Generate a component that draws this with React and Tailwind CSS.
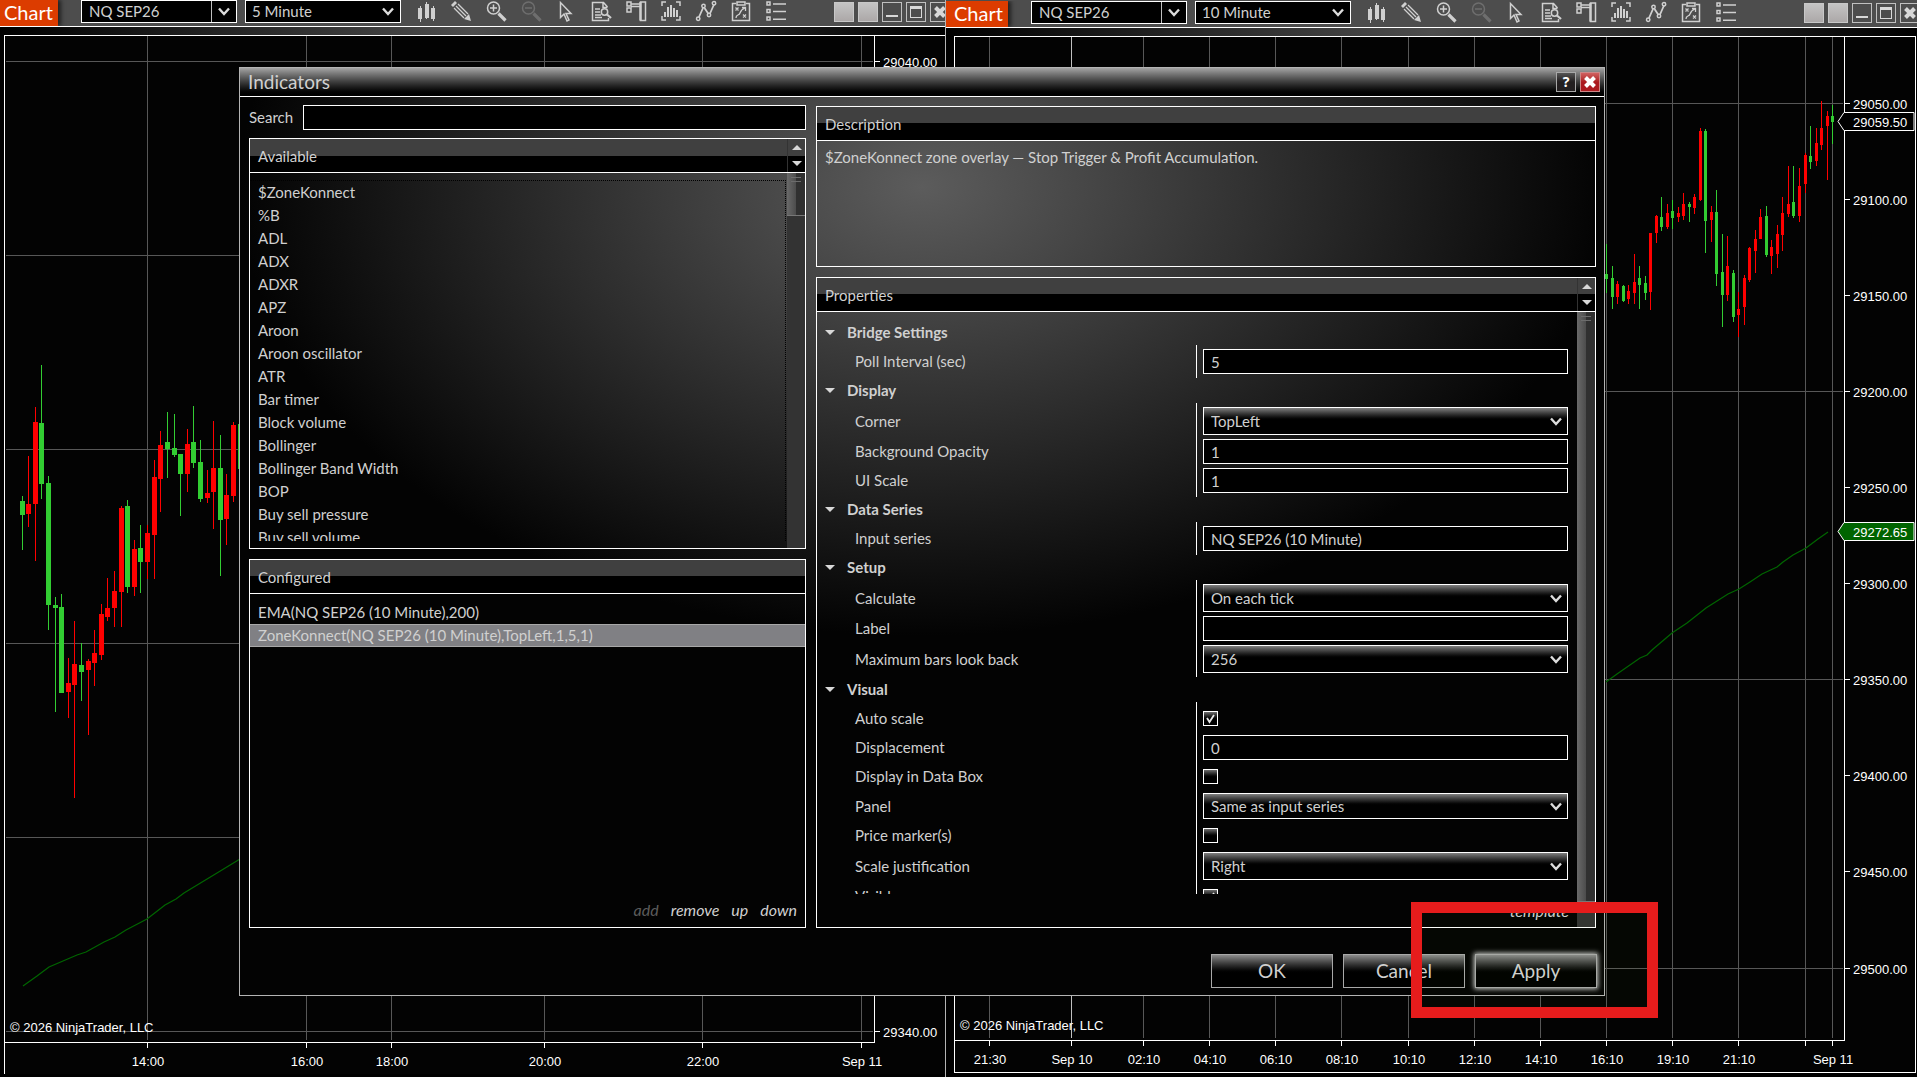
import { useState } from "react";
import clsx from "clsx";

const UP = "#32cd32";
const DOWN = "#ff0000";

// [x, high, low, bodyTop, bodyBottom, color]
const leftCandles = [
  [22, 496, 550, 501, 515, UP],
  [28, 456, 527, 504, 514, DOWN],
  [35, 407, 561, 422, 504, DOWN],
  [41, 365, 499, 423, 484, UP],
  [48, 476, 630, 483, 605, UP],
  [55, 597, 712, 605, 608, UP],
  [61, 594, 693, 607, 693, UP],
  [68, 658, 718, 683, 692, DOWN],
  [74, 621, 798, 664, 685, DOWN],
  [81, 643, 701, 665, 672, UP],
  [88, 659, 735, 661, 670, DOWN],
  [94, 630, 686, 653, 663, DOWN],
  [101, 604, 660, 614, 655, DOWN],
  [107, 578, 621, 608, 617, DOWN],
  [114, 571, 627, 591, 608, DOWN],
  [121, 506, 627, 508, 592, DOWN],
  [127, 500, 593, 506, 587, UP],
  [134, 540, 596, 549, 587, DOWN],
  [140, 525, 593, 548, 562, UP],
  [147, 525, 579, 533, 562, DOWN],
  [154, 460, 579, 477, 535, DOWN],
  [160, 431, 512, 445, 479, DOWN],
  [167, 412, 478, 442, 449, UP],
  [174, 414, 457, 448, 455, UP],
  [180, 454, 516, 454, 474, UP],
  [187, 429, 492, 444, 474, DOWN],
  [193, 406, 468, 442, 463, UP],
  [200, 440, 502, 462, 499, UP],
  [207, 470, 503, 493, 498, DOWN],
  [213, 421, 529, 468, 492, DOWN],
  [220, 435, 576, 468, 520, UP],
  [226, 474, 545, 495, 519, DOWN],
  [233, 422, 502, 425, 496, DOWN],
  [240, 424, 469, 424, 469, UP],
];

const rightCandles = [
  [1606, 244, 293, 274, 279, UP],
  [1612, 266, 309, 278, 297, UP],
  [1617, 281, 304, 284, 297, DOWN],
  [1623, 285, 302, 286, 301, UP],
  [1628, 285, 304, 291, 299, DOWN],
  [1634, 254, 304, 282, 293, DOWN],
  [1639, 266, 309, 278, 285, UP],
  [1645, 276, 300, 283, 293, UP],
  [1650, 233, 310, 233, 292, DOWN],
  [1656, 215, 243, 216, 233, DOWN],
  [1661, 197, 231, 217, 227, UP],
  [1667, 204, 229, 213, 227, DOWN],
  [1672, 200, 229, 211, 218, UP],
  [1678, 207, 222, 213, 217, DOWN],
  [1683, 193, 220, 204, 216, DOWN],
  [1689, 202, 222, 204, 207, UP],
  [1694, 194, 214, 197, 208, DOWN],
  [1700, 128, 201, 131, 200, DOWN],
  [1705, 129, 253, 131, 221, UP],
  [1711, 206, 242, 212, 220, DOWN],
  [1716, 190, 286, 212, 274, UP],
  [1722, 234, 327, 272, 295, UP],
  [1727, 236, 301, 266, 295, DOWN],
  [1733, 270, 322, 273, 317, UP],
  [1738, 292, 337, 309, 315, DOWN],
  [1744, 275, 325, 278, 307, DOWN],
  [1749, 247, 282, 248, 280, DOWN],
  [1755, 230, 273, 239, 251, DOWN],
  [1760, 209, 239, 217, 239, DOWN],
  [1766, 206, 257, 216, 255, UP],
  [1771, 240, 274, 247, 256, DOWN],
  [1777, 225, 268, 234, 254, DOWN],
  [1782, 197, 251, 213, 235, DOWN],
  [1788, 166, 217, 204, 214, DOWN],
  [1793, 166, 218, 202, 216, UP],
  [1799, 168, 222, 186, 216, DOWN],
  [1805, 153, 193, 155, 184, DOWN],
  [1810, 126, 169, 156, 162, UP],
  [1816, 128, 166, 143, 161, DOWN],
  [1821, 101, 150, 128, 145, DOWN],
  [1827, 111, 180, 116, 126, DOWN],
  [1832, 105, 144, 116, 122, UP],
];

const leftChart = {
  origin: [5, 36],
  plot: { left: 6, right: 874, top: 36, bottom: 1042 },
  bodyWidth: 5,
  candles: leftCandles,
  ema: "23,986 37,976 49,967 77,955 86,952 104,942 115,937 126,930 147,919 165,905 176,899 184,893 217,873 240,859",
  rows: [61, 255, 449, 643, 837, 1031],
  prices: [
    [61, "29040.00"],
    [1031, "29340.00"],
  ],
  times: [
    [147, "14:00"],
    [306, "16:00"],
    [391, "18:00"],
    [544, "20:00"],
    [702, "22:00"],
    [861, "Sep 11"],
  ],
  copyright: [10, 1032],
  markers: [],
};

const rightChart = {
  origin: [955, 37],
  plot: { left: 955, right: 1844, top: 37, bottom: 1040 },
  bodyWidth: 3,
  candles: rightCandles,
  ema: "1606,682 1617,674 1640,658 1647,655 1652,650 1672,633 1687,623 1706,608 1717,601 1728,594 1739,589 1750,582 1762,574 1777,567 1783,562 1793,555 1806,548 1818,539 1828,532",
  rows: [103, 391, 679, 968],
  prices: [
    [103, "29050.00"],
    [199, "29100.00"],
    [295, "29150.00"],
    [391, "29200.00"],
    [487, "29250.00"],
    [583, "29300.00"],
    [679, "29350.00"],
    [775, "29400.00"],
    [871, "29450.00"],
    [968, "29500.00"],
  ],
  times: [
    [989, "21:30"],
    [1071, "Sep 10", true],
    [1143, "02:10"],
    [1209, "04:10"],
    [1275, "06:10"],
    [1341, "08:10"],
    [1408, "10:10"],
    [1474, "12:10"],
    [1540, "14:10"],
    [1606, "16:10"],
    [1672, "19:10"],
    [1738, "21:10"],
    [1805, ""],
    [1832, "Sep 11"],
  ],
  copyright: [960, 1030],
  markers: [
    [121, "29059.50", "#000"],
    [531, "29272.65", "#006400"],
  ],
};

const available = [
  "$ZoneKonnect",
  "%B",
  "ADL",
  "ADX",
  "ADXR",
  "APZ",
  "Aroon",
  "Aroon oscillator",
  "ATR",
  "Bar timer",
  "Block volume",
  "Bollinger",
  "Bollinger Band Width",
  "BOP",
  "Buy sell pressure",
  "Buy sell volume",
];

const configured = ["EMA(NQ SEP26 (10 Minute),200)", "ZoneKonnect(NQ SEP26 (10 Minute),TopLeft,1,5,1)"];

const properties = [
  { title: "Bridge Settings", fields: [{ label: "Poll Interval (sec)", type: "text", value: "5" }] },
  {
    title: "Display",
    fields: [
      { label: "Corner", type: "select", value: "TopLeft" },
      { label: "Background Opacity", type: "text", value: "1" },
      { label: "UI Scale", type: "text", value: "1" },
    ],
  },
  { title: "Data Series", fields: [{ label: "Input series", type: "text", value: "NQ SEP26 (10 Minute)" }] },
  {
    title: "Setup",
    fields: [
      { label: "Calculate", type: "select", value: "On each tick" },
      { label: "Label", type: "text", value: "" },
      { label: "Maximum bars look back", type: "select", value: "256" },
    ],
  },
  {
    title: "Visual",
    fields: [
      { label: "Auto scale", type: "checkbox", value: true },
      { label: "Displacement", type: "text", value: "0" },
      { label: "Display in Data Box", type: "checkbox", value: false },
      { label: "Panel", type: "select", value: "Same as input series", short: true },
      { label: "Price marker(s)", type: "checkbox", value: false },
      { label: "Scale justification", type: "select", value: "Right" },
      { label: "Visible", type: "checkbox", value: true },
    ],
  },
];

const tools = [
  {
    name: "Bar type",
    icon: (
      <path
        d="M2 7h4v11H2zM4 5h1v16H4zM9 3h4v14H9zM10 1h1v17h-1zM15 7h4v11h-4zM17 5h1v15h-1z"
        fill="currentColor"
        stroke="none"
        shapeRendering="crispEdges"
      />
    ),
  },
  {
    name: "Drawing tools",
    icon: (
      <>
        <path d="M0 4l4-4 2 2-4 4z" fill="currentColor" stroke="none" />
        <path d="M3 7l10 10M5 5l10 10M7 3l10 10" strokeWidth="1.3" />
        <path d="M13 18l5-5 2 7z" fill="currentColor" stroke="none" />
      </>
    ),
  },
  {
    name: "Zoom in",
    icon: (
      <>
        <circle cx="7.5" cy="7" r="6" />
        <path d="M7.5 3.5v7M4 7h7" />
        <path d="M12.5 12.5l7 7" strokeWidth="3.2" />
      </>
    ),
  },
  {
    name: "Zoom out",
    disabled: true,
    icon: (
      <>
        <circle cx="7.5" cy="7" r="6" />
        <path d="M4 7h7" />
        <path d="M12.5 12.5l7 7" strokeWidth="3.2" />
      </>
    ),
  },
  { name: "Cursor", icon: <path d="M4.5 1.5v15l3.5-3.5 3 7 2-1-3-6.5h5z" /> },
  {
    name: "Data box",
    icon: (
      <>
        <path d="M17.5 17v2.5h-16v-18h11l4 4.5M12 1.5v5h4.5" />
        <path d="M4 8h5M4 11h5M4 14h6M4 16.5h7" strokeWidth="1.3" />
        <circle cx="13.5" cy="11" r="3.2" />
        <path d="M16 13.5l4 3.500" strokeWidth="2.2" />
      </>
    ),
  },
  {
    name: "Chart trader",
    icon: (
      <>
        <path d="M1 1h4v4H1zM1 7h4v4H1zM14.5 1h5v18.5h-5zM5 3h9M5 5.5h9" />
        <path d="M14.5 1v18.5" strokeWidth="2.4" />
      </>
    ),
  },
  {
    name: "Indicators",
    icon: (
      <>
        <path d="M1 5V1h4M15 1h4v4M1 15v4h4M15 19h4v-4" />
        <path d="M3 11h2v5H3zM6 6h2v10H6zM9 4h2v12H9zM12 7h2v9h-2zM15 9h2v7h-2z" fill="currentColor" stroke="none" />
      </>
    ),
  },
  {
    name: "Strategies",
    icon: (
      <>
        <path d="M3 16L7 7M8.5 7l4 6M14 12.5l4-9" strokeWidth="1.8" />
        <circle cx="2.2" cy="17.8" r="1.7" />
        <circle cx="7.5" cy="5" r="1.7" />
        <circle cx="13" cy="14" r="1.7" />
        <circle cx="18" cy="2.2" r="1.7" />
      </>
    ),
  },
  {
    name: "Strategy performance",
    icon: (
      <>
        <path d="M5 2.5H1.5v17h17v-17H15M6 1h8v3H6z" />
        <path
          d="M4.5 6.5l3 3M7.5 6.5l-3 3M12 13.5l3 3M15 13.5l-3 3M5 17c0-4 3-2 4-5s2-4 5-5M11 6.5h3.5V10"
          strokeWidth="1.3"
        />
      </>
    ),
  },
  {
    name: "Properties",
    icon: <path d="M1 1h3v3H1zM1 8.500h3v3H1zM1 16h3v3H1zM7 3h13M7 10.5h13M7 18.2h13" />,
  },
];

const Chevron = ({ className }) => (
  <svg viewBox="0 0 12 9" className={clsx("h-[9px] w-3", className)} fill="none" stroke="#dcdcdc" strokeWidth="2.4">
    <path d="M1 1.5l5 5.5 5-5.5" />
  </svg>
);

const Triangle = ({ up, className }) => (
  <svg viewBox="0 0 10 5" className={clsx("h-[5px] w-[10px]", className)} fill="#d8d8d8">
    <path d={up ? "M5 0l5 5H0z" : "M0 0h10L5 5z"} />
  </svg>
);

const Cross = ({ className }) => (
  <svg viewBox="0 0 12 12" className={className} stroke="currentColor" strokeWidth="4">
    <path d="M1.5 1.5l9 9M10.5 1.5l-9 9" />
  </svg>
);

const PriceChart = ({ chart }) => {
  const { origin, plot, bodyWidth, candles, ema, rows, prices, times, copyright, markers } = chart;
  const half = (bodyWidth - 1) / 2;

  return (
    <svg className="min-h-0 w-full flex-1 bg-[#030303] font-['Liberation_Sans',sans-serif] text-[13px]" fill="#fff">
      <g transform={`translate(${-origin[0]} ${-origin[1]})`}>
        <g shapeRendering="crispEdges">
          {rows.map((y) => (
            <rect key={y} x={plot.left} y={y} width={plot.right - plot.left - 1} height="1" fill="#575757" />
          ))}
          {times.map(([x, , bright]) => (
            <rect
              key={x}
              x={x}
              y={plot.top}
              width="1"
              height={plot.bottom - plot.top - 2}
              fill={bright ? "#c0c0c0" : "#575757"}
            />
          ))}
          {candles.map(([x, high, low, top, bottom, color]) => (
            <g key={x} fill={color}>
              <rect x={x} y={high} width="1" height={low - high} />
              <rect x={x - half} y={top} width={bodyWidth} height={bottom - top} />
            </g>
          ))}
          <rect x={plot.right} y={plot.top} width="1" height={plot.bottom - plot.top} />
          <rect x={origin[0]} y={plot.bottom} width={plot.right - origin[0] + 1} height="1" />
          {prices.map(([y]) => (
            <rect key={y} x={plot.right} y={y} width="6" height="1" />
          ))}
          {times.map(([x]) => (
            <rect key={x} x={x} y={plot.bottom} width="1" height="6" />
          ))}
        </g>
        <polyline points={ema} fill="none" stroke="#006400" strokeWidth="1.3" />
        {prices.map(([y, label]) => (
          <text key={y} x={plot.right + 9} y={y + 6}>
            {label}
          </text>
        ))}
        {times.map(([x, label]) => (
          <text key={x} x={x + 1} y={plot.bottom + 24} textAnchor="middle">
            {label}
          </text>
        ))}
        <text x={copyright[0]} y={copyright[1]}>
          © 2026 NinjaTrader, LLC
        </text>
        {markers.map(([y, label, fill]) => (
          <g key={label}>
            <path d={`M${plot.right - 6} ${y + 0.5}l6-9h70v18h-70z`} fill={fill} stroke="#fff" />
            <text x={plot.right + 9} y={y + 6}>
              {label}
            </text>
          </g>
        ))}
      </g>
    </svg>
  );
};

const Toolbar = ({ interval, tagClass, buttonsClass, className }) => (
  <div className={clsx("flex overflow-hidden border-b border-white bg-[#4d4d4d]", className)}>
    <div className={clsx("shrink-0 bg-[#dc3c00] text-[20px] leading-6 text-white shadow-[3px_0_4px_#222]", tagClass)}>
      Chart
    </div>
    <div className="flex shrink-0 items-start pl-[23px]">
      <div className="flex h-[23px] w-[156px] border border-white bg-black">
        <input
          aria-label="Instrument"
          defaultValue="NQ SEP26"
          className="h-5 w-[129px] pl-[7px] leading-5 outline-none"
        />
        <button aria-label="Choose instrument" className="flex flex-1 items-center justify-center border-l border-[#c0c0c0]">
          <Chevron />
        </button>
      </div>
      <div className="ml-2 grid h-[23px] w-[156px] items-start border border-white bg-black">
        <select
          aria-label="Interval"
          defaultValue={interval}
          className="col-start-1 row-start-1 h-5 appearance-none pl-1.5 leading-5 outline-none"
        >
          <option>{interval}</option>
        </select>
        <Chevron className="pointer-events-none col-start-1 row-start-1 mr-1.5 self-center justify-self-end" />
      </div>
      <div className="ml-[15px] flex gap-[15px] pt-px">
        {tools.map((tool) => (
          <button
            key={tool.name}
            aria-label={tool.name}
            disabled={tool.disabled}
            className="size-5 text-[#d0d0d0] disabled:text-[#6e6e6e]"
          >
            <svg viewBox="0 0 20 20" className="size-5 overflow-visible" fill="none" stroke="currentColor" strokeWidth="1.5">
              {tool.icon}
            </svg>
          </button>
        ))}
      </div>
      <div className={clsx("flex gap-1 pt-0.5", buttonsClass)}>
        <button aria-label="Link instrument" className="size-5 border border-[#c8c8c8] bg-linear-to-b from-[#c4c4c4] to-[#aca8a8]" />
        <button aria-label="Link interval" className="size-5 border border-[#c8c8c8] bg-linear-to-b from-[#c4c4c4] to-[#aca8a8]" />
        <button aria-label="Minimize" className="flex size-5 items-end justify-center border border-[#c0c0c0] pb-1">
          <span className="h-0.5 w-3 bg-[#d8d8d8]" />
        </button>
        <button aria-label="Maximize" className="flex size-5 items-center justify-center border border-[#c0c0c0]">
          <span className="size-3 border border-t-[3px] border-[#d8d8d8]" />
        </button>
        <button aria-label="Close" className="flex size-5 items-center justify-center border border-[#c0c0c0]">
          <Cross className="size-3 text-[#d8d8d8]" />
        </button>
      </div>
    </div>
  </div>
);

const PanelHeader = ({ title, spinner }) => (
  <div className="flex h-[34px] shrink-0 border-b border-white bg-linear-to-b from-[#404040] from-50% to-black to-50%">
    <h2 className="flex-1 pl-2 leading-[34px]">{title}</h2>
    {spinner && (
      <div className="flex w-[18px] flex-col border-l border-[#333]">
        <button aria-label={`Scroll ${title} up`} className="flex flex-1 items-center justify-center">
          <Triangle up />
        </button>
        <button aria-label={`Scroll ${title} down`} className="flex flex-1 items-center justify-center">
          <Triangle />
        </button>
      </div>
    )}
  </div>
);

const ScrollTrack = ({ thumbClass }) => (
  <div className="w-[18px] shrink-0 bg-[#333]">
    <div
      className={clsx(
        "flex flex-col items-center gap-[3px] border-b border-[#777] bg-linear-to-r from-[#6a6a6a] from-0% via-[#4c4c4c] via-50% to-[#303030] to-50% pt-1",
        thumbClass
      )}
    >
      <span className="h-px w-2.5 bg-[#6c6c6c]" />
      <span className="h-px w-2.5 bg-[#6c6c6c]" />
    </div>
  </div>
);

const Field = ({ field }) => {
  const id = field.label.toLowerCase().replace(/[^a-z]+/g, "-");
  const box = "w-full border border-white pl-[7px]";

  return (
    <div className="flex items-center">
      <label htmlFor={id} className="w-[348px] shrink-0">
        {field.label}
      </label>
      {field.type === "text" && (
        <input id={id} defaultValue={field.value} className={clsx(box, "h-[25px] bg-black outline-none")} />
      )}
      {field.type === "select" && (
        <div className="grid w-full items-center">
          <select
            id={id}
            defaultValue={field.value}
            className={clsx(
              box,
              "col-start-1 row-start-1 appearance-none bg-linear-to-b from-[#808080] to-black to-50% outline-none",
              field.short ? "h-[26px]" : "h-7"
            )}
          >
            <option>{field.value}</option>
          </select>
          <Chevron className="pointer-events-none col-start-1 row-start-1 mr-1.5 justify-self-end" />
        </div>
      )}
      {field.type === "checkbox" && (
        <div className="grid h-[25px] items-center">
          <input
            id={id}
            type="checkbox"
            defaultChecked={field.value}
            className="peer col-start-1 row-start-1 size-[15px] appearance-none border border-white bg-linear-to-b from-[#707070] to-black to-60%"
          />
          <svg
            viewBox="0 0 15 15"
            className="pointer-events-none invisible col-start-1 row-start-1 size-[15px] peer-checked:visible"
            fill="none"
            stroke="#e8e8e8"
            strokeWidth="1.8"
          >
            <path d="M4 7l2.5 4L11 4" />
          </svg>
        </div>
      )}
    </div>
  );
};

const DialogButton = ({ active, children }) => (
  <button
    className={clsx(
      "h-[34px] w-[122px] border border-[#a8a8a8] bg-linear-to-b from-[#8c8c8c] to-black to-60%",
      active && "shadow-[0_0_5px_1px_#d0d0d0]"
    )}
  >
    {children}
  </button>
);

const IndicatorsDialog = () => {
  const [selected, setSelected] = useState(configured[1]);

  return (
    <div
      role="dialog"
      aria-label="Indicators"
      className="absolute top-[67px] right-[312px] left-[239px] border border-[#b4b4b4] bg-[#030303]"
    >
      <div className="flex h-[29px] items-center gap-1 border-b border-white bg-linear-to-b from-[#a4a4a4] to-black pr-1 pl-2">
        <h1 className="flex-1 text-[19px] leading-7">Indicators</h1>
        <button
          aria-label="Help"
          className="size-5 border border-[#a8a8a8] bg-linear-to-b from-[#555] to-[#231f20] to-50% font-['Noto_Sans',sans-serif] text-sm leading-4 font-bold text-white"
        >
          ?
        </button>
        <button
          aria-label="Close"
          className="flex size-5 items-center justify-center border border-[#c88] bg-linear-to-b from-[#d06060] to-[#ac1a20] to-50% text-white"
        >
          <Cross className="size-3" />
        </button>
      </div>

      <div className="bg-[radial-gradient(50%_50%_at_50%_10%,#5c5c5c,#030303)] pb-[7px]">
        <div className="flex gap-[10px] pr-2 pl-[9px]">
          <div className="flex w-[557px] flex-col pt-2">
            <div className="flex h-[25px] items-center">
              <label htmlFor="search" className="w-[54px]">
                Search
              </label>
              <input id="search" className="h-[25px] flex-1 border border-white bg-black px-2 outline-none" />
            </div>

            <section className="mt-2 flex flex-col border border-white">
              <PanelHeader title="Available" spinner />
              <div className="flex h-[375px]">
                <div className="min-w-0 flex-1 py-[7px] pr-px">
                  <ul className="h-[361px] overflow-hidden border-t border-r border-dotted border-black">
                    {available.map((name) => (
                      <li key={name} className="h-[23px] pl-2 leading-[22px]">
                        {name}
                      </li>
                    ))}
                  </ul>
                </div>
                <ScrollTrack thumbClass="h-[43px]" />
              </div>
            </section>

            <section className="mt-[10px] flex flex-1 flex-col border border-white">
              <PanelHeader title="Configured" />
              <ul className="flex-1 pt-[7px]">
                {configured.map((name) => (
                  <li key={name}>
                    <button
                      onClick={() => setSelected(name)}
                      className={clsx(
                        "block h-[23px] w-full border-y pl-2 text-left leading-[21px]",
                        name === selected ? "border-[#a8a8a8] bg-[#808084]" : "border-transparent"
                      )}
                    >
                      {name}
                    </button>
                  </li>
                ))}
              </ul>
              <div className="flex justify-end gap-3 pr-2 pb-[7px] text-base leading-5 italic">
                <button disabled className="text-[#5c5c5c]">
                  add
                </button>
                <button>remove</button>
                <button>up</button>
                <button>down</button>
              </div>
            </section>
          </div>

          <div className="flex min-w-0 flex-1 flex-col gap-[10px] pt-[9px]">
            <section className="h-[161px] border border-white">
              <PanelHeader title="Description" />
              <p className="px-2 pt-[5px] leading-[22px]">
                $ZoneKonnect zone overlay — Stop Trigger &amp; Profit Accumulation.
              </p>
            </section>

            <section className="flex flex-col border border-white">
              <PanelHeader title="Properties" spinner />
              <div className="flex">
                <div className="min-w-0 flex-1 pt-2">
                  <div className="h-[574px] overflow-hidden">
                    {properties.map((group) => (
                      <div key={group.title}>
                        <h3 className="flex h-[25px] items-center pl-2 font-bold">
                          <Triangle className="mr-3" />
                          {group.title}
                        </h3>
                        <div className="grid grid-cols-[380px_1fr]">
                          <div className="col-start-1 row-start-1 border-r border-white" />
                          <div className="col-span-2 col-start-1 row-start-1 flex flex-col gap-1 py-1 pr-[9px] pl-[38px]">
                            {group.fields.map((field) => (
                              <Field key={field.label} field={field} />
                            ))}
                          </div>
                        </div>
                      </div>
                    ))}
                  </div>
                  <div className="flex h-[33px] items-center justify-end pr-2">
                    <button className="text-base italic">template</button>
                  </div>
                </div>
                <ScrollTrack thumbClass="h-[590px]" />
              </div>
            </section>
          </div>
        </div>

        <div className="mt-[26px] flex justify-end gap-[10px] pr-[7px] text-[19px]">
          <DialogButton>OK</DialogButton>
          <DialogButton>Cancel</DialogButton>
          <DialogButton active>Apply</DialogButton>
        </div>
      </div>

      <div className="pointer-events-none absolute right-[-54px] bottom-[-23px] h-[116px] w-[247px] border-[11px] border-[#e61c1c] bg-lime-500/2" />
    </div>
  );
};

const App = () => {
  return (
    <main className="relative flex min-h-screen overflow-hidden bg-black font-['Lato',sans-serif] text-[15px] text-[#d0d0d0]">
      <div className="flex w-[945px] shrink-0 flex-col overflow-hidden bg-[linear-gradient(to_right,#000,#4d4d4d_50%,#000)]">
        <Toolbar interval="5 Minute" className="h-[27px]" tagClass="w-[58px] pl-1" buttonsClass="ml-12" />
        <div className="mt-2 flex flex-1 flex-col bg-black pb-[3px] pl-1">
          <div className="flex flex-1 flex-col border-t border-l border-white">
            <PriceChart chart={leftChart} />
          </div>
        </div>
      </div>

      <div className="flex min-w-0 flex-1 flex-col overflow-hidden border-l border-[#b4b4b4] bg-[linear-gradient(to_right,#000,#4d4d4d_50%,#000)]">
        <div className="bg-[#4d4d4d] pt-px">
          <Toolbar interval="10 Minute" className="h-[27px]" tagClass="w-[62px] pl-2" buttonsClass="ml-[68px]" />
        </div>
        <div className="mt-2 flex flex-1 flex-col bg-black pr-px pb-1 pl-2">
          <div className="flex flex-1 flex-col border border-white">
            <PriceChart chart={rightChart} />
          </div>
        </div>
      </div>

      <IndicatorsDialog />
    </main>
  );
};

export default App;
